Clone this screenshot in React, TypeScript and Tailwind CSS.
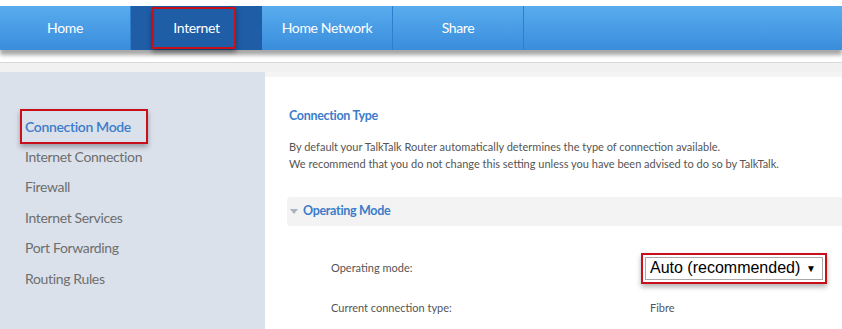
import { useState } from 'react';

const tabs = ['Home', 'Internet', 'Home Network', 'Share'];
const sideLinks = ['Connection Mode', 'Internet Connection', 'Firewall', 'Internet Services', 'Port Forwarding', 'Routing Rules'];

export default function App() {
    const [active] = useState('Internet');

    return (
        <div className="w-[842px] h-[329px] overflow-hidden bg-white font-['Lato',sans-serif]">
            {/* Top nav */}
            <div className="h-[6px] bg-white" />
            <div className="relative h-[44px] flex bg-gradient-to-b from-[#58acee] to-[#3a8ddb] shadow-[0_5px_4px_rgba(0,0,0,0.35)]">
                {tabs.map((t) => (
                    <div
                        key={t}
                        className={
                            t === active
                                ? 'relative w-[131px] flex items-center justify-center pb-[2px] text-[14px] text-white tracking-tight bg-[#1f5da6]'
                                : 'w-[131px] flex items-center justify-center pb-[2px] text-[14px] text-white tracking-tight border-r border-[#2f7fcc]'
                        }
                    >
                        {t}
                        {t === active && (
                            <span className="absolute left-[21px] top-[1px] w-[84px] h-[42px] border-2 border-[#c8101a] shadow-[0_3px_5px_rgba(0,0,0,0.4)]" />
                        )}
                    </div>
                ))}
            </div>

            <div className="h-[12px]" />
            <div className="h-px bg-[#d8d8d8]" />
            <div className="h-[9px] bg-[#f1f1f1]" />

            <div className="flex h-[257px]">
                {/* Sidebar */}
                <div className="w-[265px] bg-[#dae1eb] pt-[39px] pl-[25px]">
                    <ul className="flex flex-col">
                        {sideLinks.map((l, i) => (
                            <li key={l} className="h-[30.4px] flex items-center">
                                {i === 0 ? (
                                    <span className="relative text-[14px] tracking-tight text-[#3b7dca] font-semibold">
                                        {l}
                                        <span className="absolute left-[-5px] top-[-7px] w-[128px] h-[35px] border-2 border-[#c8101a] shadow-[0_3px_5px_rgba(0,0,0,0.3)]" />
                                    </span>
                                ) : (
                                    <span className="text-[14px] tracking-tight text-[#6e6e6e]">{l}</span>
                                )}
                            </li>
                        ))}
                    </ul>
                </div>

                {/* Content */}
                <div className="flex-1 bg-[#f4f4f4] pt-[5px]">
                    <div className="h-full bg-white pl-[22px] pt-[30px]">
                        <h2 className="pl-[2px] text-[12.5px] font-bold tracking-tight text-[#3b7dca]">Connection Type</h2>
                        <div className="mt-[12px] pl-[2px] text-[11px] leading-[17px] text-[#555]">
                            <p>By default your TalkTalk Router automatically determines the type of connection available.</p>
                            <p>We recommend that you do not change this setting unless you have been advised to do so by TalkTalk.</p>
                        </div>

                        <div className="mt-[25px] h-[29px] flex items-center gap-[5px] rounded-l bg-[#f3f3f3] pl-[3px]">
                            <svg width="8" height="5" viewBox="0 0 8 5">
                                <path d="M0 0h8L4 5z" fill="#a9b3bf" />
                            </svg>
                            <span className="text-[12.5px] font-bold tracking-tight text-[#3b7dca]">Operating Mode</span>
                        </div>

                        <div className="mt-[31px] pl-[44px] grid grid-cols-[314px_1fr] items-center text-[11px] text-[#555]">
                            <span>Operating mode:</span>
                            <div className="relative w-[178px]">
                                <div className="h-[23px] flex items-center justify-between border border-[#a9a9a9] bg-white pl-[4px] pr-[6px] font-['Liberation_Sans',sans-serif] text-[16px] text-black">
                                    <span>Auto (recommended)</span>
                                    <span className="text-[10px]">▼</span>
                                </div>
                                <span className="absolute left-[-4px] top-[-4px] w-[186px] h-[31px] border-2 border-[#c8101a] shadow-[0_3px_5px_rgba(0,0,0,0.3)]" />
                            </div>
                            <span className="mt-[20px]">Current connection type:</span>
                            <span className="mt-[20px] pl-[5px]">Fibre</span>
                        </div>
                    </div>
                </div>
            </div>
        </div>
    );
}
